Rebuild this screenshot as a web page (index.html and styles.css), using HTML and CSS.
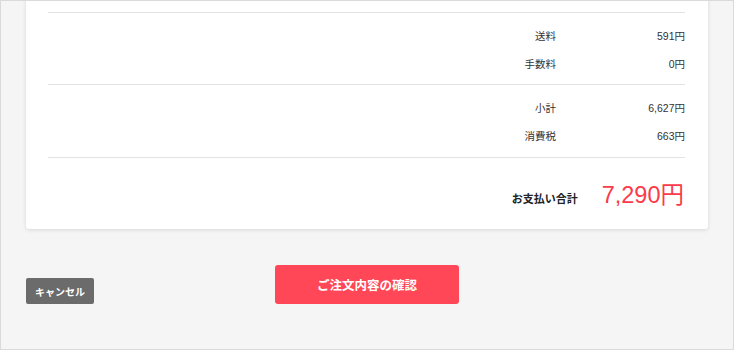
FILE: index.html
```html
<!DOCTYPE html>
<html lang="ja">
<head>
<meta charset="utf-8">
<title>お支払い</title>
<link rel="stylesheet" href="styles.css">
</head>
<body>
<div class="frame">
  <div class="card">
    <div class="section">
      <div class="row"><span class="label">送料</span><span class="value">591円</span></div>
      <div class="row"><span class="label">手数料</span><span class="value">0円</span></div>
    </div>
    <div class="section section-last">
      <div class="row"><span class="label">小計</span><span class="value">6,627円</span></div>
      <div class="row"><span class="label">消費税</span><span class="value">663円</span></div>
    </div>
    <div class="total">
      <span class="total-label">お支払い合計</span>
      <span class="total-value">7,290円</span>
    </div>
  </div>
  <div class="actions">
    <button class="btn-cancel">キャンセル</button>
    <button class="btn-confirm">ご注文内容の確認</button>
  </div>
</div>
</body>
</html>
```
FILE: styles.css
```css
html, body {
  margin: 0;
  padding: 0;
}
body {
  font-family: "Liberation Sans", "Noto Sans CJK JP", sans-serif;
  color: #333;
}
.frame {
  box-sizing: border-box;
  width: 734px;
  height: 350px;
  border: 1px solid #dadada;
  background: #f5f5f5;
  padding: 0 25px;
  overflow: hidden;
}
.card {
  background: #fff;
  margin-top: -10px;
  padding: 21px 23px 0 22px;
  border-radius: 0 0 3px 3px;
  box-shadow: 0 1px 4px rgba(0, 0, 0, 0.12);
}
.section {
  border-top: 1px solid #e3e3e3;
  padding: 9px 0 7px;
}
.section-last {
  padding-bottom: 8px;
}
.row {
  display: flex;
  justify-content: flex-end;
  align-items: center;
  height: 27.5px;
  font-size: 10.5px;
}
.label {
  text-align: right;
}
.value {
  width: 129px;
  text-align: right;
}
.total {
  border-top: 1px solid #e3e3e3;
  display: flex;
  justify-content: flex-end;
  align-items: baseline;
  gap: 24px;
  padding: 24px 1px 0 0;
  height: 47px;
  line-height: 26px;
}
.total-label {
  font-size: 11px;
  font-weight: bold;
  color: #222;
}
.total-value {
  font-size: 23.5px;
  color: #fb3a4a;
}
.actions {
  display: grid;
  grid-template-columns: 1fr auto 1fr;
  align-items: end;
  margin-top: 36px;
}
.btn-cancel {
  justify-self: start;
  width: 68px;
  height: 26px;
  border: 0;
  border-radius: 2px;
  background: #6b6b6b;
  color: #fff;
  font-family: "Noto Sans CJK JP", sans-serif;
  font-size: 10px;
  font-weight: bold;
  padding: 0;
}
.btn-confirm {
  width: 184px;
  height: 39px;
  border: 0;
  border-radius: 3px;
  background: #ff4757;
  color: #fff;
  font-family: "Noto Sans CJK JP", sans-serif;
  font-size: 12.5px;
  font-weight: bold;
  padding: 0;
}
```
